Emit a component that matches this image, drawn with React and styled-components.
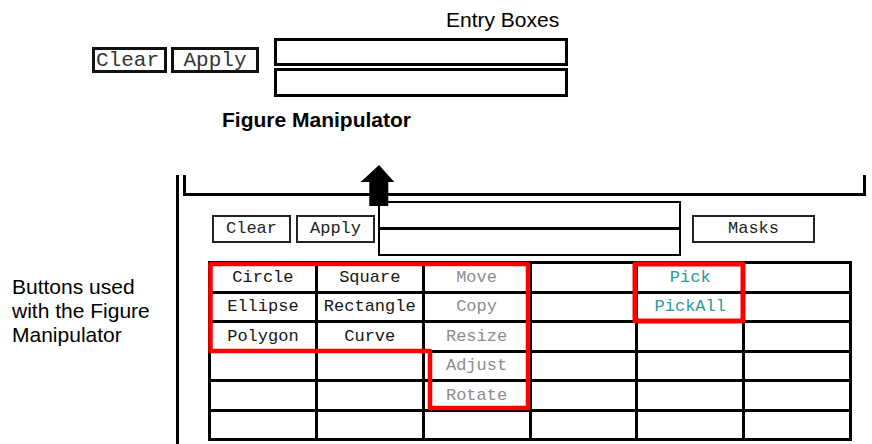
import React from 'react';
import styled, { createGlobalStyle } from 'styled-components';

const Global = createGlobalStyle`
  html, body { margin: 0; padding: 0; background: #fff; }
  body {
    width: 872px;
    height: 444px;
    overflow: hidden;
    font-family: "Liberation Sans", Arial, sans-serif;
  }
`;

const Page = styled.div`
  width: 872px;
  height: 444px;
  display: flex;
  flex-direction: column;
  overflow: hidden;
  color: #000;
`;

const Header = styled.header`
  height: 175px;
  padding-top: 8px;
  box-sizing: border-box;
  display: flex;
  flex-direction: column;
`;

const Caption = styled.div`
  font-family: "Liberation Sans", Arial, sans-serif;
  font-size: 21px;
  line-height: 24px;
  font-weight: ${p => (p.$bold ? 700 : 400)};
  margin-left: ${p => p.$indent}px;
  margin-top: ${p => p.$top || 0}px;
  white-space: nowrap;
`;

const TopRow = styled.div`
  display: flex;
  align-items: flex-start;
  margin-top: 6px;
  padding-left: 92px;
`;

const TopButtons = styled.div`
  display: flex;
  gap: 4px;
  margin-top: 9px;
`;

const TopButton = styled.button`
  width: ${p => p.$w}px;
  height: 26px;
  box-sizing: border-box;
  border: 3px solid #111;
  background: #fff;
  padding: 0 0 0 ${p => (p.$left ? 1 : 0)}px;
  display: flex;
  align-items: center;
  justify-content: ${p => (p.$left ? 'flex-start' : 'center')};
  font-family: "Liberation Mono", "Courier New", monospace;
  font-size: 21px;
  color: #333;
`;

const TopEntries = styled.div`
  display: flex;
  flex-direction: column;
  gap: 2px;
  margin-left: 15px;
`;

const TopEntry = styled.div`
  width: 294px;
  height: ${p => p.$h}px;
  box-sizing: border-box;
  border: 3px solid #000;
  background: #fff;
`;

const Lower = styled.section`
  flex: 1;
  display: flex;
`;

const SideNote = styled.p`
  width: 176px;
  flex: none;
  margin: 0;
  padding: 100px 0 0 12px;
  box-sizing: border-box;
  font-family: "Liberation Sans", Arial, sans-serif;
  font-size: 21px;
  line-height: 24px;
`;

const Window = styled.div`
  flex: 1;
  position: relative;
  border-left: 3px solid #000;
  display: flex;
  flex-direction: column;
`;

const Bracket = styled.div`
  margin-left: 4px;
  width: 683px;
  height: 21px;
  box-sizing: border-box;
  border-left: 3px solid #000;
  border-right: 3px solid #000;
  border-bottom: 3px solid #000;
`;

const Toolbar = styled.div`
  display: flex;
  align-items: center;
  margin-top: 5px;
  padding-left: 33px;
`;

const ToolButton = styled.button`
  width: ${p => p.$w}px;
  height: 28px;
  margin-left: ${p => p.$gap || 0}px;
  box-sizing: border-box;
  border: 2px solid #222;
  background: #fff;
  padding: 0;
  font-family: "Liberation Mono", "Courier New", monospace;
  font-size: 17px;
  color: #222;
  display: flex;
  align-items: center;
  justify-content: center;
`;

const EntryStack = styled.div`
  width: 303px;
  height: 55px;
  margin-left: 3px;
  box-sizing: border-box;
  border: 2px solid #000;
  display: flex;
  flex-direction: column;
`;

const EntryField = styled.div`
  flex: 1;
  background: #fff;
  border-bottom: ${p => (p.$first ? '3px solid #000' : 'none')};
`;

const GridWrap = styled.div`
  position: relative;
  margin-top: 5px;
  margin-left: 29px;
  width: 644px;
  height: 180px;
`;

const Grid = styled.div`
  width: 100%;
  height: 100%;
  box-sizing: border-box;
  display: grid;
  grid-template-columns: repeat(6, 1fr);
  grid-template-rows: repeat(6, 1fr);
  gap: 3px;
  padding: 3px;
  background: #000;
`;

const toneColor = { dark: '#151515', dim: '#8c8c8c', teal: '#2a9a9a' };

const Cell = styled.div`
  background: #fff;
  display: flex;
  align-items: center;
  justify-content: center;
  font-family: "Liberation Mono", "Courier New", monospace;
  font-size: 17px;
  color: ${p => toneColor[p.$tone] || '#151515'};
  white-space: nowrap;
`;

const Overlay = styled.svg`
  position: absolute;
  left: 0;
  top: 0;
  overflow: visible;
  pointer-events: none;
`;

const Arrow = styled.svg`
  position: absolute;
  left: 181px;
  top: -10px;
  overflow: visible;
`;

const rows = [
  [['Circle', 'dark'], ['Square', 'dark'], ['Move', 'dim'], null, ['Pick', 'teal'], null],
  [['Ellipse', 'dark'], ['Rectangle', 'dark'], ['Copy', 'dim'], null, ['PickAll', 'teal'], null],
  [['Polygon', 'dark'], ['Curve', 'dark'], ['Resize', 'dim'], null, null, null],
  [null, null, ['Adjust', 'dim'], null, null, null],
  [null, null, ['Rotate', 'dim'], null, null, null],
  [null, null, null, null, null, null],
];

export default function App() {
  return (
    <Page>
      <Global />
      <Header>
        <Caption $indent={446}>Entry Boxes</Caption>
        <TopRow>
          <TopButtons>
            <TopButton $w={75} $left>Clear</TopButton>
            <TopButton $w={88}>Apply</TopButton>
          </TopButtons>
          <TopEntries>
            <TopEntry $h={28} />
            <TopEntry $h={29} />
          </TopEntries>
        </TopRow>
        <Caption $indent={222} $top={11} $bold>Figure Manipulator</Caption>
      </Header>
      <Lower>
        <SideNote>
          Buttons used<br />with the Figure<br />Manipulator
        </SideNote>
        <Window>
          <Bracket />
          <Toolbar>
            <ToolButton $w={79}>Clear</ToolButton>
            <ToolButton $w={79} $gap={5}>Apply</ToolButton>
            <EntryStack>
              <EntryField $first />
              <EntryField />
            </EntryStack>
            <ToolButton $w={123} $gap={11}>Masks</ToolButton>
          </Toolbar>
          <GridWrap>
            <Grid>
              {rows.flatMap((row, r) =>
                row.map((c, i) => (
                  <Cell key={`${r}-${i}`} $tone={c ? c[1] : 'dark'}>
                    {c ? c[0] : ''}
                  </Cell>
                ))
              )}
            </Grid>
            <Overlay width="644" height="180" viewBox="0 0 644 180">
              <path
                d="M2.5 3 H320 V147 H222 V90 H2.5 Z"
                fill="none"
                stroke="#ff0000"
                strokeWidth="4.5"
                strokeLinejoin="round"
              />
              <rect
                x="427"
                y="3"
                width="108"
                height="57"
                fill="none"
                stroke="#ff0000"
                strokeWidth="5"
                strokeLinejoin="round"
              />
            </Overlay>
          </GridWrap>
          <Arrow width="35" height="42" viewBox="0 0 35 42">
            <path d="M19 0 L34.3 17 H28.3 V41 H9.3 V17 H0.7 Z" fill="#000" />
          </Arrow>
        </Window>
      </Lower>
    </Page>
  );
}
